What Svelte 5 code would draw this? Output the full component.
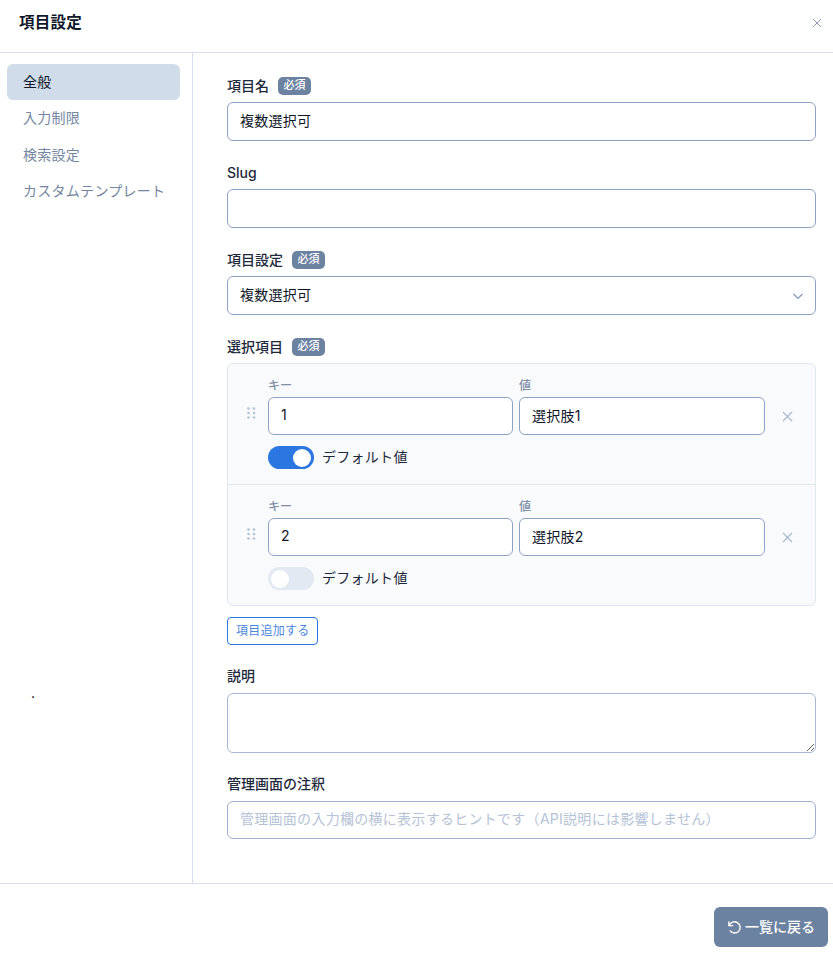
<script>
  const nav = ['全般', '入力制限', '検索設定', 'カスタムテンプレート'];
  const rows = [
    { key: '1', value: '選択肢1', on: true },
    { key: '2', value: '選択肢2', on: false }
  ];
</script>

<div class="page">
  <header class="head">
    <h1>項目設定</h1>
    <button class="close" aria-label="閉じる">
      <svg width="10" height="10" viewBox="0 0 10 10"><path d="M1 1l8 8M9 1l-8 8" stroke="#8d9bb3" stroke-width="1" fill="none"/></svg>
    </button>
  </header>
  <div class="body">
    <nav class="side">
      {#each nav as item, i}
        <div class="nav" class:active={i === 0}>{item}</div>
      {/each}
      <div class="dot">.</div>
    </nav>
    <main class="main">
      <div class="field">
        <div class="label">項目名 <span class="req">必須</span></div>
        <input class="input" value="複数選択可" />
      </div>
      <div class="field">
        <div class="label">Slug</div>
        <input class="input" value="" />
      </div>
      <div class="field">
        <div class="label">項目設定 <span class="req">必須</span></div>
        <div class="input select">
          <span>複数選択可</span>
          <svg width="12" height="12" viewBox="0 0 12 12"><path d="M1.500 4l4.500 4.500L10.500 4" stroke="#8298ba" stroke-width="1.200" fill="none"/></svg>
        </div>
      </div>
      <div class="field">
        <div class="label">選択項目 <span class="req">必須</span></div>
        <div class="repeater">
          {#each rows as row}
            <div class="row">
              <div class="handle">
                <svg width="10" height="14" viewBox="0 0 10 14">
                  {#each [1.500, 6, 10.500] as y}
                    <circle cx="1.500" cy={y} r="1.300" fill="#b4c2d6"/>
                    <circle cx="7" cy={y} r="1.300" fill="#b4c2d6"/>
                  {/each}
                </svg>
              </div>
              <div class="content">
                <div class="pair">
                  <div class="col">
                    <div class="sub">キー</div>
                    <input class="input small" value={row.key} />
                  </div>
                  <div class="col">
                    <div class="sub">値</div>
                    <input class="input small" value={row.value} />
                  </div>
                </div>
                <div class="toggle-line">
                  <span class="toggle" class:on={row.on}><i></i></span>
                  <span class="toggle-text">デフォルト値</span>
                </div>
              </div>
              <div class="remove">
                <svg width="11" height="11" viewBox="0 0 11 11"><path d="M1 1l9 9M10 1l-9 9" stroke="#a9b9d0" stroke-width="1.200" fill="none"/></svg>
              </div>
            </div>
          {/each}
        </div>
        <button class="add">項目追加する</button>
      </div>
      <div class="field">
        <div class="label tight">説明</div>
        <textarea class="input area"></textarea>
      </div>
      <div class="field">
        <div class="label tight">管理画面の注釈</div>
        <input class="input light" placeholder="管理画面の入力欄の横に表示するヒントです（API説明には影響しません）" />
      </div>
    </main>
  </div>
  <footer class="foot">
    <button class="back">
      <svg width="15" height="15" viewBox="0 0 24 24" fill="none" stroke="#fff" stroke-width="2.200" stroke-linecap="round" stroke-linejoin="round"><path d="M3 3v6h6"/><path d="M3.500 9A9 9 0 1 1 5 17.500"/></svg>
      <span class="back-text">一覧に戻る</span>
    </button>
  </footer>
</div>

<style>
  :global(body) {
    margin: 0;
    background: #fff;
  }
  * {
    box-sizing: border-box;
  }
  .page {
    height: 956px;
    display: flex;
    flex-direction: column;
    font-family: Inter, "Noto Sans CJK JP", sans-serif;
    color: #0f172a;
    font-size: 14px;
    letter-spacing: 0.02em;
    background: #fff;
  }
  .head {
    height: 53px;
    flex: none;
    display: flex;
    align-items: center;
    justify-content: space-between;
    padding: 0 11px 8px 19px;
    border-bottom: 1px solid #d5dfed;
  }
  h1 {
    margin: 0;
    font-size: 15.500px;
    font-weight: 700;
    line-height: 22px;
    padding-top: 2px;
    color: #0f172a;
  }
  .close {
    border: 0;
    background: none;
    padding: 0;
    margin-top: 2px;
    display: flex;
  }
  .body {
    flex: 1;
    display: flex;
    min-height: 0;
  }
  .side {
    width: 193px;
    flex: none;
    border-right: 1px solid #d5dfed;
    padding: 11px 12px 0 7px;
  }
  .nav {
    height: 36.400px;
    line-height: 36px;
    padding-left: 16px;
    border-radius: 6px;
    font-size: 14px;
    color: #7486a0;
  }
  .nav.active {
    background: #d0dcea;
    color: #0f172a;
  }
  .dot {
    margin-top: 475px;
    padding-left: 24px;
    font-size: 14px;
    line-height: 16px;
    color: #000;
  }
  .main {
    flex: 1;
    min-width: 0;
    padding: 25px 17px 0 34px;
    display: flex;
    flex-direction: column;
    gap: 24px;
  }
  .field {
    display: flex;
    flex-direction: column;
  }
  .label {
    height: 24px;
    display: flex;
    align-items: center;
    gap: 9px;
    font-size: 14px;
    font-weight: 500;
    padding-bottom: 10px;
    letter-spacing: 0;
    color: #1e293b;
  }
  .tight {
    padding-bottom: 12px;
  }
  .req {
    height: 18px;
    margin-top: 2px;
    padding: 0 5.500px;
    border-radius: 5px;
    background: #6c82a1;
    color: #fff;
    font-size: 11px;
    line-height: 17px;
    font-weight: 500;
  }
  .input {
    width: 100%;
    height: 39px;
    border: 1px solid #8ea3c4;
    border-radius: 6px;
    background: #fff;
    padding: 0 12px 3px;
    font: inherit;
    font-size: 14px;
    letter-spacing: 0.02em;
    color: #0f172a;
    outline: none;
    display: block;
  }
  .input::placeholder {
    color: #b5c3d8;
    opacity: 1;
  }
  .select {
    display: flex;
    align-items: center;
    justify-content: space-between;
    padding-right: 11px;
  }
  .select svg {
    margin-top: 3px;
  }
  .area {
    height: 60px;
    resize: vertical;
    border-color: #a6b8d2;
  }
  .light {
    height: 38px;
    border-color: #9db0cc;
  }
  .small {
    height: 38px;
  }
  .repeater {
    border: 1px solid #dfe7f1;
    border-radius: 6px;
    background: #f8fafc;
  }
  .row {
    height: 121px;
    display: flex;
    border-bottom: 1px solid #dfe7f1;
    padding-left: 19px;
  }
  .row:last-child {
    border-bottom: 0;
    height: 120px;
  }
  .handle {
    width: 21px;
    flex: none;
    padding-top: 43px;
  }
  .content {
    width: 497px;
    flex: none;
  }
  .pair {
    display: flex;
    gap: 6px;
    padding-top: 14px;
  }
  .col {
    flex: 1;
    min-width: 0;
  }
  .col:first-child {
    flex: none;
    width: 245px;
  }
  .sub {
    height: 19px;
    font-size: 12px;
    line-height: 16px;
    font-weight: 500;
    letter-spacing: 0;
    color: #7f8fa6;
  }
  .toggle-line {
    display: flex;
    align-items: center;
    gap: 8px;
    margin-top: 11px;
    font-size: 14px;
    color: #1e293b;
  }
  .toggle-text {
    padding-bottom: 3px;
  }
  .toggle {
    width: 46px;
    height: 23px;
    border-radius: 12px;
    background: #e2e9f3;
    padding: 2.500px 3px;
    display: flex;
  }
  .toggle i {
    width: 18px;
    height: 18px;
    border-radius: 50%;
    background: #fff;
  }
  .toggle.on {
    background: #2b76e0;
    justify-content: flex-end;
  }
  .remove {
    width: 11px;
    margin-left: 17px;
    padding-top: 44px;
  }
  .add {
    align-self: flex-start;
    margin-top: 11px;
    height: 28px;
    padding: 0 8px 3px;
    border: 1px solid #2b76e0;
    border-radius: 4px;
    background: #fff;
    color: #4c87dc;
    font: inherit;
    font-size: 12px;
    letter-spacing: 0.02em;
  }
  .foot {
    height: 73px;
    flex: none;
    border-top: 1px solid #d5dfed;
    display: flex;
    justify-content: flex-end;
    padding: 23px 5px 0 0;
  }
  .back {
    width: 114px;
    height: 40px;
    border: 0;
    border-radius: 6px;
    background: #6c82a1;
    color: #fff;
    font: inherit;
    font-size: 14px;
    font-weight: 500;
    letter-spacing: 0;
    display: flex;
    align-items: center;
    justify-content: center;
    gap: 3px;
  }
  .back-text {
    padding-bottom: 2px;
  }
</style>
